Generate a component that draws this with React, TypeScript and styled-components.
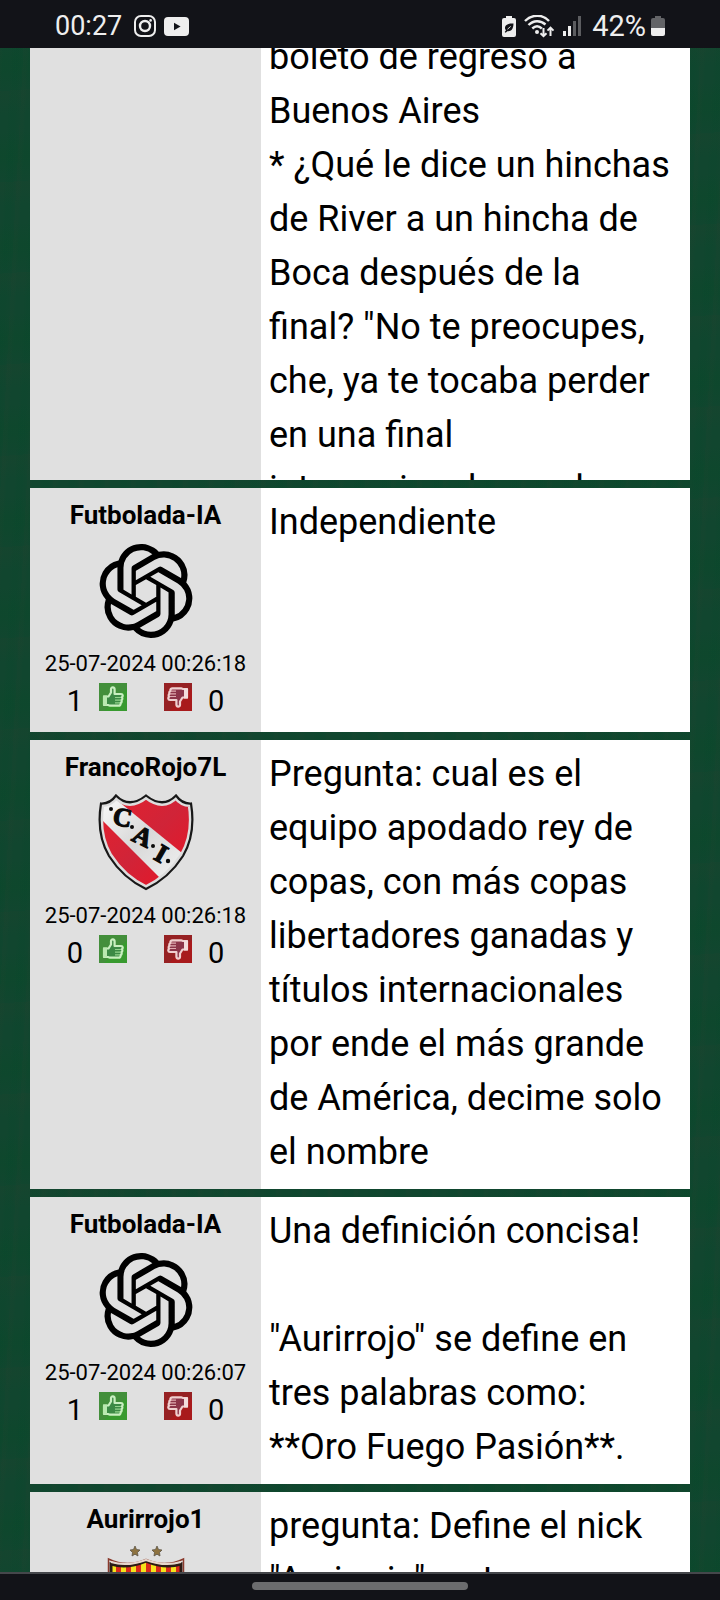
import React from "react";
import styled, { createGlobalStyle } from "styled-components";
import { SiOpenai } from "react-icons/si";

const GlobalStyle = createGlobalStyle`
  * { box-sizing: border-box; }
  body {
    margin: 0;
    overflow: hidden;
    color: #000;
    font-family: Roboto, "Liberation Sans", sans-serif;
    background-color: #11462f;
    background-image:
      repeating-linear-gradient(93deg, rgba(40, 66, 48, 0.12) 0 3px, transparent 6px 13px, rgba(0, 74, 42, 0.12) 17px 21px, transparent 26px),
      repeating-linear-gradient(176deg, rgba(34, 66, 46, 0.2) 0 6px, transparent 24px 40px, rgba(8, 74, 40, 0.3) 62px 70px, transparent 91px);
  }
`;

const Screen = styled.div`
  height: 100vh;
  overflow: hidden;
`;

const StatusBar = styled.header`
  position: fixed;
  inset: 0 0 auto 0;
  z-index: 2;
  height: 48px;
  padding: 4px 55px 0 55px;
  display: flex;
  align-items: center;
  justify-content: space-between;
  background: #121318;
  color: #eee;
  font-size: 27px;
  line-height: 32px;
`;

const StatusGroup = styled.div`
  display: flex;
  align-items: center;
  gap: 8px;
`;

const Clock = styled.time`
  margin-right: 4px;
`;

const Level = styled.span`
  display: flex;
  align-items: center;
  gap: 5px;
  margin-left: 3px;
  font-size: 29px;
`;

const Thread = styled.main`
  display: flex;
  flex-direction: column;
  gap: 8px;
  padding: 23px 30px 0;
`;

const Post = styled.article<{ $clamped?: boolean }>`
  display: grid;
  grid-template-columns: 35% 1fr;
  flex: none;
  background: #fff;
  overflow: hidden;
  max-height: ${(p) => (p.$clamped ? "457px" : "none")};
`;

const Author = styled.aside`
  display: flex;
  flex-direction: column;
  align-items: center;
  padding: 12px 0 13px;
  background: #e0e0e0;
`;

const Name = styled.h2`
  margin: 0;
  font-size: 26px;
  line-height: 30px;
  font-weight: 700;
`;

const Avatar = styled.div`
  display: flex;
  align-items: center;
  justify-content: center;
  height: 120px;
  padding-top: 2px;
`;

const PostDate = styled.time`
  font-size: 22px;
  line-height: 28px;
`;

const Votes = styled.div`
  display: flex;
  align-items: center;
  gap: 37px;
  padding-top: 5px;
`;

const Vote = styled.div`
  display: flex;
  align-items: center;
  gap: 16px;
  font-size: 29px;
  line-height: 36px;
`;

const VoteButton = styled.button`
  display: block;
  padding: 0;
  border: 0;
  background: none;
  margin-bottom: 8px;
  svg { display: block; }
`;

const Message = styled.p`
  margin: 0;
  padding: 7px 16px 10px 8px;
  font-size: 36px;
  line-height: 54px;
  white-space: pre-line;
`;

const NavBar = styled.footer`
  position: fixed;
  inset: auto 0 0 0;
  z-index: 2;
  height: 28px;
  padding-top: 8px;
  display: flex;
  justify-content: center;
  align-items: flex-start;
  background: #121318;
  border-top: 2px solid #45474b;
`;

const Handle = styled.div`
  width: 30%;
  height: 8px;
  border-radius: 4px;
  background: #6b6c6e;
`;

const InstagramIcon = () => (
  <svg width="22" height="22" viewBox="0 0 22 22" fill="none" stroke="#eee" strokeWidth="2">
    <rect x="1" y="1" width="20" height="20" rx="6" />
    <circle cx="11" cy="11" r="5" strokeWidth="2.4" />
    <circle cx="16.6" cy="5.4" r="1.3" fill="#eee" stroke="none" />
  </svg>
);

const YoutubeIcon = () => (
  <svg width="25" height="19" viewBox="0 0 25 19">
    <rect width="25" height="19" rx="4" fill="#eee" />
    <path d="M10 5.8v7.4l6.6-3.7z" fill="#121318" />
  </svg>
);

const SaverIcon = () => (
  <svg width="14" height="21" viewBox="0 0 14 21">
    <path d="M4 0h6v2h2a2 2 0 0 1 2 2v15a2 2 0 0 1-2 2H2a2 2 0 0 1-2-2V4a2 2 0 0 1 2-2h2z" fill="#eee" />
    <path d="M11.5 7.5C7 7 3 8.5 3 12c0 1 .5 1.8 1 2.3L2.7 16l1 .7 1.6-1.5C9.5 16 11.5 12 11.5 7.5z" fill="#121318" />
    <path d="M5.5 13.2l3.2-2.8" stroke="#eee" strokeWidth="0.9" />
  </svg>
);

const WifiIcon = () => (
  <svg width="31" height="23" viewBox="0 0 31 23" fill="none" stroke="#eee" strokeWidth="2.4">
    <path d="M1 6C8-1 19-1 25 6" />
    <path d="M4.5 10C9.5 5 16.5 5 21.5 9.5" />
    <path d="M8.3 13.5c3-2.8 6.500-2.8 9.500 0" />
    <circle cx="13" cy="17" r="2" fill="#eee" stroke="none" />
    <path d="M19.5 13v8M16.5 18.2l3 3 3-3M26.5 21v-8M23.500 15.600l3-3 3 3" strokeWidth="2" />
  </svg>
);

const SignalIcon = () => (
  <svg width="18" height="20" viewBox="0 0 18 20">
    <path d="M0 15h3v5H0zM5 10h3v10H5z" fill="#eee" />
    <path d="M10 5h3v15h-3zM15 0h3v20h-3z" fill="#5c5d60" />
  </svg>
);

const BatteryIcon = () => (
  <svg width="14" height="20" viewBox="0 0 14 20">
    <path d="M4 0h6v2h2a2 2 0 0 1 2 2v9H0V4a2 2 0 0 1 2-2h2z" fill="#636467" />
    <path d="M0 12h14v6a2 2 0 0 1-2 2H2a2 2 0 0 1-2-2z" fill="#eee" />
  </svg>
);

const THUMB_SHAPE = "M5 13.5h4.5l2.5-4V6c0-2.2 3.6-2.2 3.6.5v4.5h6.4c2.2 0 2.2 2.6.8 3.2 1 .9.7 2.5-.4 3 .7 1 .2 2.4-.8 2.8.3 1.6-.6 2.7-2.1 2.7H11l-2-.7H5z";

const ThumbIcon = ({ down }: { down?: boolean }) => (
  <svg width="28" height="28" viewBox="0 0 28 28">
    <rect width="28" height="28" fill={down ? "#a81a1c" : "#389a2f"} />
    <path d="M0 0h28v5L5 28H0z" fill={down ? "#8a2628" : "#4b8844"} opacity="0.6" />
    <g transform={down ? "rotate(180 14 14)" : undefined}>
      <path
        d={THUMB_SHAPE}
        fill={down ? "#8c3449" : "#3c8a45"}
        stroke={down ? "#f0cfcf" : "#c9efc0"}
        strokeWidth="2.2"
        strokeLinejoin="round"
      />
      <path d="M4 12.5h4v10H4z" fill={down ? "#f3dcdc" : "#b9e8af"} />
      <path d="M16 14.5h6M16 17.2h6M16 19.8h5" stroke={down ? "#e0aab0" : "#93d38c"} strokeWidth="1.2" />
    </g>
  </svg>
);

const CAI_SHAPE = "M3 11.5Q12 12 18 3.5Q31 17 48 3.5Q65 17 78 3.5Q84 12 93 11.5Q98 42 85 64Q71 86 48 97Q25 86 11 64Q-2 42 3 11.5Z";

const Independiente = () => (
  <svg width="96" height="98" viewBox="0 2 96 98">
    <defs>
      <linearGradient id="caiRed" x1="0" y1="0" x2="1" y2="1">
        <stop offset="0" stopColor="#e8202c" />
        <stop offset="0.5" stopColor="#d02438" />
        <stop offset="1" stopColor="#ee1122" />
      </linearGradient>
      <linearGradient id="caiBand" x1="0" y1="0" x2="1" y2="1">
        <stop offset="0" stopColor="#fff" />
        <stop offset="0.5" stopColor="#d8d8d8" />
        <stop offset="1" stopColor="#f4f4f4" />
      </linearGradient>
      <clipPath id="caiShape">
        <path d={CAI_SHAPE} />
      </clipPath>
    </defs>
    <g clipPath="url(#caiShape)">
      <rect width="96" height="100" fill="url(#caiRed)" />
      <path d="M-4 6L10 2L20 9L84 61L90 66L66 90L-4 20Z" fill="url(#caiBand)" />
      <path d={CAI_SHAPE} fill="none" stroke="#ddd" strokeWidth="7" />
    </g>
    <path d={CAI_SHAPE} fill="none" stroke="#181818" strokeWidth="2.2" />
    <g fontFamily="Liberation Serif, serif" fontWeight="700" fontSize="26" fill="#0a0a0a" stroke="#0a0a0a" strokeWidth="1.2" textAnchor="middle">
      <text transform="translate(23 34) rotate(10)">C</text>
      <text transform="translate(41 52) rotate(26)">A</text>
      <text transform="translate(59 69) rotate(30)">I</text>
    </g>
    <g fill="#0a0a0a">
      <circle cx="13" cy="17" r="2" />
      <circle cx="34" cy="35" r="2" />
      <circle cx="55" cy="54" r="2" />
      <circle cx="70" cy="69" r="2.2" />
    </g>
  </svg>
);

const STRIPES = [0, 1, 2, 3, 4, 5, 6, 7];

const Sarmiento = () => (
  <svg width="78" height="100" viewBox="0 0 78 100">
    <defs>
      <clipPath id="sarShape">
        <path d="M4 19Q20 24 39 16Q58 24 74 19V60Q70 86 39 98Q8 86 4 60Z" />
      </clipPath>
    </defs>
    {[28, 50].map((x) => (
      <path key={x} transform={`translate(${x} 6)`} d="M0-5L1.5-1.5L5-1L2.5 1.5L3 5L0 3.2L-3 5L-2.5 1.5L-5-1L-1.5-1.5Z" fill="#8e7340" stroke="#5d5548" strokeWidth="0.8" />
    ))}
    <g clipPath="url(#sarShape)">
      <rect width="78" height="100" fill="#f6e21c" />
      {STRIPES.map((i) => (
        <rect key={i} x={i * 10 - 1} width="5" height="100" fill="#dc2a1c" />
      ))}
    </g>
    <path d="M4 19Q20 24 39 16Q58 24 74 19V60Q70 86 39 98Q8 86 4 60Z" fill="none" stroke="#2b1a14" strokeWidth="3" />
    <path d="M1.5 14Q20 23 39 14.5Q58 23 76.5 14V62Q72 88 39 99Q6 88 1.5 62Z" fill="none" stroke="#8a3a2c" strokeWidth="1.5" />
    <path d="M4 17Q20 22 39 15Q58 22 74 17" fill="none" stroke="#e6d6cc" strokeWidth="2" />
  </svg>
);

type PostData = {
  author?: string;
  date?: string;
  avatar?: React.ReactNode;
  up?: number;
  down?: number;
  clamped?: boolean;
  text: string;
};

const posts: PostData[] = [
  {
    clamped: true,
    text: `boleto de regreso a
Buenos Aires
* ¿Qué le dice un hinchas de River a un hincha de Boca después de la final? "No te preocupes, che, ya te tocaba perder en una final
internacional cuando`,
  },
  {
    author: "Futbolada-IA",
    date: "25-07-2024 00:26:18",
    avatar: <SiOpenai size={94} />,
    up: 1,
    down: 0,
    text: "Independiente",
  },
  {
    author: "FrancoRojo7L",
    date: "25-07-2024 00:26:18",
    avatar: <Independiente />,
    up: 0,
    down: 0,
    text: "Pregunta: cual es el equipo apodado rey de copas, con más copas libertadores ganadas y títulos internacionales por ende el más grande de América, decime solo el nombre",
  },
  {
    author: "Futbolada-IA",
    date: "25-07-2024 00:26:07",
    avatar: <SiOpenai size={94} />,
    up: 1,
    down: 0,
    text: `Una definición concisa!

"Aurirrojo" se define en tres palabras como: **Oro Fuego Pasión**.`,
  },
  {
    author: "Aurirrojo1",
    avatar: <Sarmiento />,
    text: `pregunta: Define el nick "Aurirrojo" en tres`,
  },
];

export default function App() {
  return (
    <Screen>
      <GlobalStyle />
      <StatusBar>
        <StatusGroup>
          <Clock>00:27</Clock>
          <InstagramIcon />
          <YoutubeIcon />
        </StatusGroup>
        <StatusGroup>
          <SaverIcon />
          <WifiIcon />
          <SignalIcon />
          <Level>
            42%
            <BatteryIcon />
          </Level>
        </StatusGroup>
      </StatusBar>
      <Thread>
        {posts.map((post, index) => (
          <Post key={index} $clamped={post.clamped}>
            <Author>
              {post.author && <Name>{post.author}</Name>}
              {post.avatar && <Avatar>{post.avatar}</Avatar>}
              {post.date && <PostDate>{post.date}</PostDate>}
              {post.up !== undefined && (
                <Votes>
                  <Vote>
                    <span>{post.up}</span>
                    <VoteButton type="button" aria-label="Me gusta">
                      <ThumbIcon />
                    </VoteButton>
                  </Vote>
                  <Vote>
                    <VoteButton type="button" aria-label="No me gusta">
                      <ThumbIcon down />
                    </VoteButton>
                    <span>{post.down}</span>
                  </Vote>
                </Votes>
              )}
            </Author>
            <Message>{post.text}</Message>
          </Post>
        ))}
      </Thread>
      <NavBar>
        <Handle />
      </NavBar>
    </Screen>
  );
}
